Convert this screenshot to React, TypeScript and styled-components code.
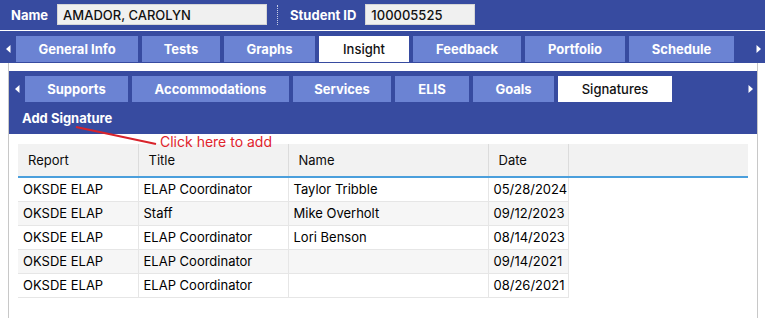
import React from "react";
import styled, { createGlobalStyle } from "styled-components";

const BLUE = "#374ba0";
const TAB = "#6b83d3";
const FONT = `Inter, "Open Sans", "DejaVu Sans", sans-serif`;

const GlobalStyle = createGlobalStyle`
  html, body { margin: 0; padding: 0; background: #fff; }
  body {
    font-family: ${FONT};
    font-size: 13px;
    color: #1e1e1e;
  }
  * { box-sizing: border-box; }
`;

const Page = styled.div`
  position: relative;
  width: 765px;
  height: 318px;
  overflow: hidden;
  background: #fff;
`;

const TopBar = styled.div`
  display: flex;
  align-items: center;
  height: 30px;
  padding-left: 11px;
  background: ${BLUE};
`;

const Label = styled.span`
  color: #fff;
  font-weight: 700;
  font-size: 13px;
  margin-right: 9px;
`;

const Field = styled.div<{ $w: number }>`
  width: ${(p) => p.$w}px;
  height: 21px;
  margin-top: -1px;
  background: #f0f0f0;
  border: 1px solid #d6d6d6;
  display: flex;
  align-items: center;
  padding-left: 5px;
  font-size: 13px;
  font-weight: 500;
  color: #111;
`;

const Divider = styled.div`
  width: 0;
  height: 20px;
  border-left: 1px dotted #c9cfe6;
  margin: 0 12px 0 10px;
`;

const TabBar = styled.div<{ $top?: boolean }>`
  display: flex;
  align-items: flex-end;
  height: ${(p) => (p.$top ? 33 : 32)}px;
  border-top: ${(p) => (p.$top ? "1px solid #fff" : "none")};
  padding-bottom: 1px;
  background: ${BLUE};
`;

const Arrow = styled.div<{ $w: number }>`
  width: ${(p) => p.$w}px;
  height: 26px;
  display: flex;
  align-items: center;
  justify-content: center;
  flex-shrink: 0;
`;

const Spacer = styled.div`
  flex: 1;
`;

const Tabs = styled.div`
  display: flex;
  gap: 4px;
`;

const Tab = styled.div<{ $w: number; $active?: boolean }>`
  width: ${(p) => p.$w}px;
  height: 26px;
  display: flex;
  align-items: center;
  justify-content: center;
  font-size: 13px;
  font-weight: ${(p) => (p.$active ? 500 : 700)};
  color: ${(p) => (p.$active ? "#111" : "#fff")};
  background: ${(p) => (p.$active ? "#fff" : TAB)};
  white-space: nowrap;
`;

const Panel = styled.div`
  margin: 0 7px 0 8px;
  padding-top: 8px;
  border-left: 1px solid #c8c8c8;
  border-right: 1px solid #c8c8c8;
  height: 260px;
`;

const ActionBar = styled.div`
  height: 31px;
  background: ${BLUE};
  display: flex;
  align-items: center;
  padding: 0 0 2px 13px;
`;

const ActionLink = styled.span`
  color: #fff;
  font-weight: 700;
  font-size: 13px;
`;

const TableWrap = styled.div`
  padding: 10px 9px 0 9px;
`;

const Table = styled.table`
  width: 100%;
  border-collapse: collapse;
  table-layout: fixed;
  font-size: 13px;
`;

const Th = styled.th<{ $w?: number }>`
  width: ${(p) => (p.$w ? `${p.$w}px` : "auto")};
  height: 33px;
  background: #f2f2f2;
  border-right: 1px solid #dcdcdc;
  border-bottom: 2px solid #4b9fdc;
  text-align: left;
  font-weight: 400;
  padding: 0 0 0 10px;
  color: #0c0c0c;
  &:last-child { border-right: none; }
`;

const Tr = styled.tr<{ $alt: boolean }>`
  background: ${(p) => (p.$alt ? "#f6f6f6" : "#fff")};
`;

const Td = styled.td`
  height: 24px;
  padding: 0 0 0 5px;
  border-right: 1px solid #e6e6e6;
  border-bottom: 1px solid #e6e6e6;
  font-weight: 400;
  color: #000;
  white-space: nowrap;
`;

const FillTd = styled.td`
  background: #fff;
`;

const Annotation = styled.div`
  position: absolute;
  left: 74px;
  top: 123px;
  display: flex;
  align-items: flex-end;
  pointer-events: none;
`;

const AnnotationText = styled.span`
  color: #e0242c;
  font-size: 14px;
  font-weight: 400;
  margin-left: 2px;
  margin-bottom: -3px;
  white-space: nowrap;
`;

const LeftTri = () => (
  <svg width="5" height="8" viewBox="0 0 5 8">
    <path d="M4.5 0 L0 4 L4.5 8 Z" fill="#fff" />
  </svg>
);
const RightTri = () => (
  <svg width="5" height="8" viewBox="0 0 5 8">
    <path d="M0.5 0 L5 4 L0.5 8 Z" fill="#fff" />
  </svg>
);

const mainTabs = [
  { label: "General Info", w: 122 },
  { label: "Tests", w: 78 },
  { label: "Graphs", w: 91 },
  { label: "Insight", w: 90, active: true },
  { label: "Feedback", w: 108 },
  { label: "Portfolio", w: 100 },
  { label: "Schedule", w: 105 },
];

const subTabs = [
  { label: "Supports", w: 103 },
  { label: "Accommodations", w: 157 },
  { label: "Services", w: 98 },
  { label: "ELIS", w: 74 },
  { label: "Goals", w: 81 },
  { label: "Signatures", w: 114, active: true },
];

const rows = [
  ["OKSDE ELAP", "ELAP Coordinator", "Taylor Tribble", "05/28/2024"],
  ["OKSDE ELAP", "Staff", "Mike Overholt", "09/12/2023"],
  ["OKSDE ELAP", "ELAP Coordinator", "Lori Benson", "08/14/2023"],
  ["OKSDE ELAP", "ELAP Coordinator", "", "09/14/2021"],
  ["OKSDE ELAP", "ELAP Coordinator", "", "08/26/2021"],
];

export default function App() {
  return (
    <Page>
      <GlobalStyle />
      <TopBar>
        <Label>Name</Label>
        <Field $w={210}>AMADOR, CAROLYN</Field>
        <Divider />
        <Label>Student ID</Label>
        <Field $w={110}>100005525</Field>
      </TopBar>
      <TabBar $top>
        <Arrow $w={16}>
          <LeftTri />
        </Arrow>
        <Tabs>
          {mainTabs.map((t) => (
            <Tab key={t.label} $w={t.w} $active={t.active}>
              {t.label}
            </Tab>
          ))}
        </Tabs>
        <Spacer />
        <Arrow $w={14}>
          <RightTri />
        </Arrow>
      </TabBar>
      <Panel>
        <TabBar>
          <Arrow $w={16}>
            <LeftTri />
          </Arrow>
          <Tabs>
            {subTabs.map((t) => (
              <Tab key={t.label} $w={t.w} $active={t.active}>
                {t.label}
              </Tab>
            ))}
          </Tabs>
          <Spacer />
          <Arrow $w={14}>
            <RightTri />
          </Arrow>
        </TabBar>
        <ActionBar>
          <ActionLink>Add Signature</ActionLink>
        </ActionBar>
        <TableWrap>
          <Table>
            <thead>
              <tr>
                <Th $w={120}>Report</Th>
                <Th $w={150}>Title</Th>
                <Th $w={200}>Name</Th>
                <Th $w={80}>Date</Th>
                <Th />
              </tr>
            </thead>
            <tbody>
              {rows.map((r, i) => (
                <Tr key={i} $alt={i % 2 === 1}>
                  {r.map((c, j) => (
                    <Td key={j}>{c}</Td>
                  ))}
                  <FillTd />
                </Tr>
              ))}
            </tbody>
          </Table>
        </TableWrap>
      </Panel>
      <Annotation>
        <svg width="84" height="24" viewBox="0 0 84 24">
          <line x1="2" y1="4" x2="82" y2="21" stroke="#d8232b" strokeWidth="2.2" />
        </svg>
        <AnnotationText>Click here to add</AnnotationText>
      </Annotation>
    </Page>
  );
}
